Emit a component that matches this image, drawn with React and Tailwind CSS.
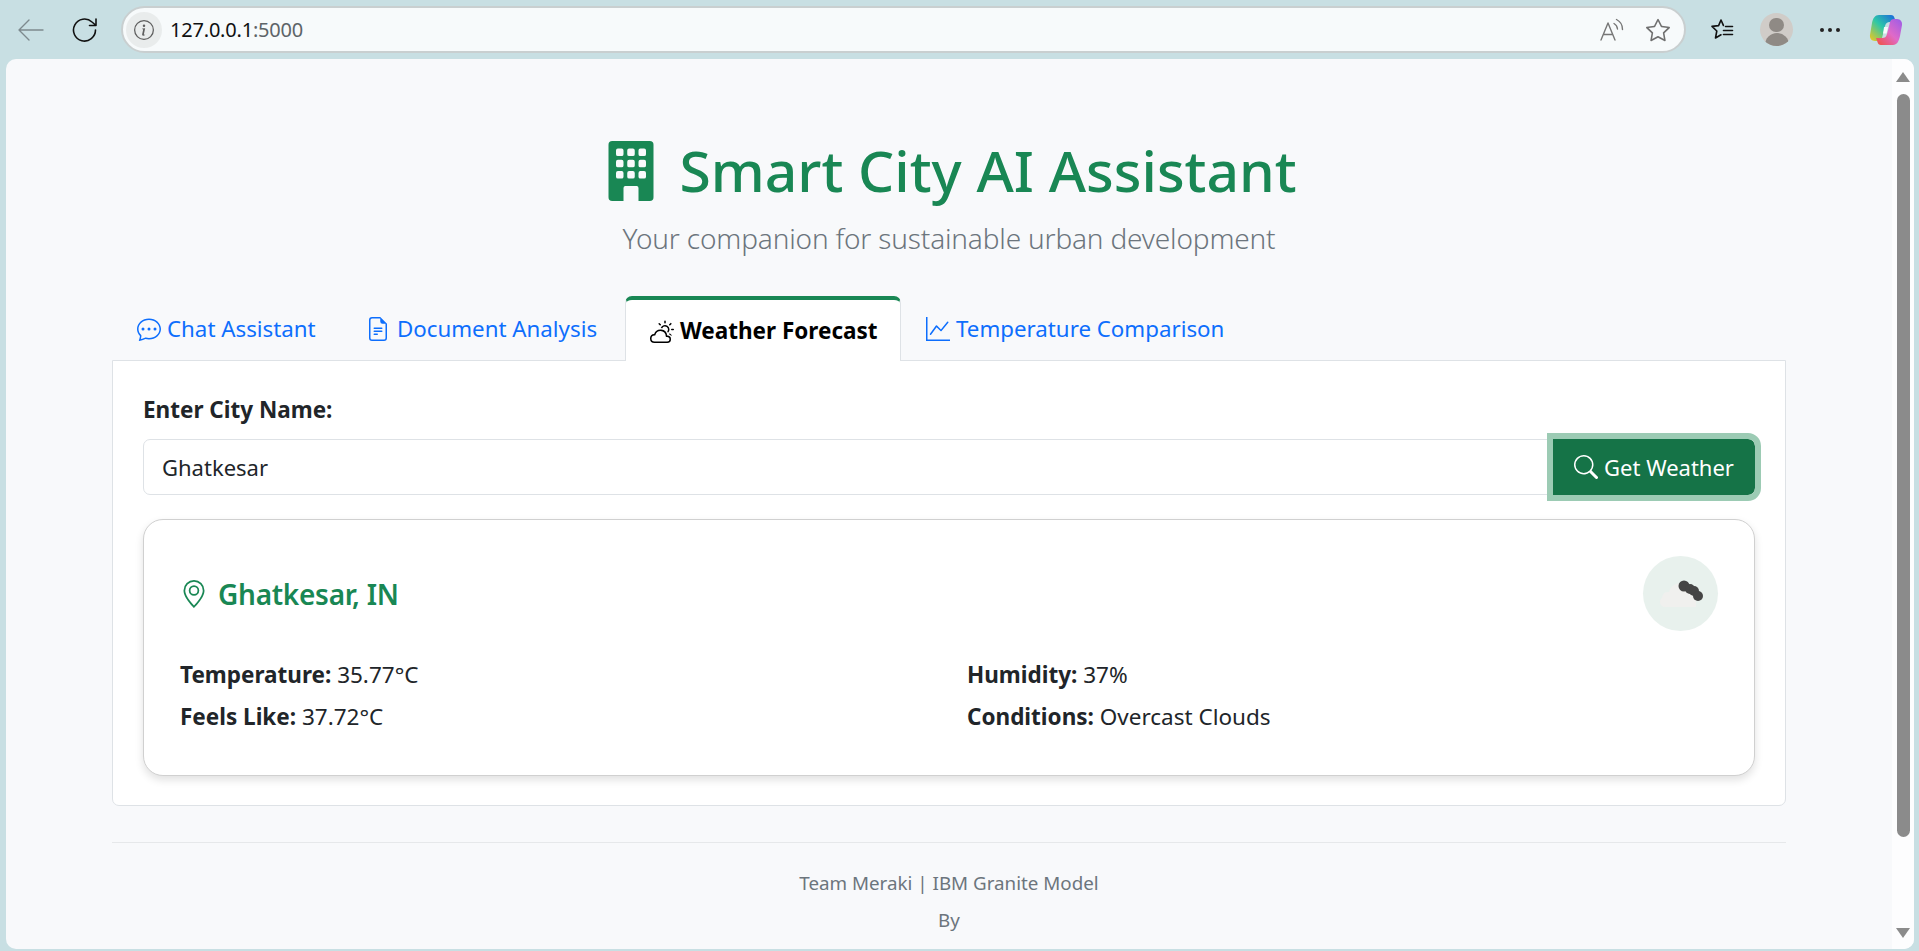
import { BsBuildingFill, BsChatDots, BsFileEarmarkText, BsCloudSun, BsGraphUp, BsSearch, BsGeoAlt, BsInfoCircle, BsStar } from "react-icons/bs";

function ReadAloud() {
  return (
    <svg width="26" height="26" viewBox="0 0 26 26" fill="none" stroke="#767676" strokeWidth="1.4" strokeLinecap="round" strokeLinejoin="round">
      <path d="M1 23 8 6l7 17M3.500 17.500h9" />
      <path d="M14 6.500a7 7 0 0 1 3.500 5.500M16.500 2.500a11 11 0 0 1 6 10" />
    </svg>
  );
}

function Favorites() {
  return (
    <svg width="26" height="26" viewBox="0 0 26 26" fill="none" stroke="#111" strokeWidth="1.6" strokeLinejoin="round" strokeLinecap="round">
      <path d="M12 3 9.600 8.600 3 9.400l4.800 4.600-1.300 7 5.500-3.200M12 3l2.400 5.400" />
      <path d="M16.500 9.500h7M14.500 13.500h9M14.500 17.500h9" />
    </svg>
  );
}

function Copilot() {
  return (
    <svg width="34" height="32" viewBox="0 0 34 32">
      <defs>
        <linearGradient id="copilotA" x1="0" y1="1" x2="1" y2="0">
          <stop offset="0" stopColor="#f5c71a" />
          <stop offset="0.5" stopColor="#2cc7a8" />
          <stop offset="1" stopColor="#1a62e0" />
        </linearGradient>
        <linearGradient id="copilotB" x1="0" y1="1" x2="1" y2="0">
          <stop offset="0" stopColor="#f2503a" />
          <stop offset="0.5" stopColor="#e06ac8" />
          <stop offset="1" stopColor="#9a5ce8" />
        </linearGradient>
      </defs>
      <path d="M10 1h12c2 0 3 1 3.500 3L27 8h-6c-3 0-4 1-5 4l-3 12c-.6 2-2 3-4 3H6c-3.500 0-5.500-3-5-6l2-12C4 4 6 1 10 1z" fill="url(#copilotA)" />
      <path d="M24 31H12c-2 0-3-1-3.500-3L7 24h6c3 0 4-1 5-4l3-12c.6-2 2-3 4-3h3c3.500 0 5.500 3 5 6l-2 11c-1 5-3 9-7 9z" fill="url(#copilotB)" />
      <path d="M15 13h4l-1.500 6.500H14z" fill="#fff" opacity="0.85" />
    </svg>
  );
}

function WeatherIcon() {
  return (
    <svg width="50" height="40" viewBox="0 0 50 40">
      <path d="M9 33a5 5 0 0 1-3-9 6 6 0 0 1 7-6 11 11 0 0 1 14-8l13 16v7z" fill="#f0f0ee" />
      <circle cx="28" cy="12" r="5.500" fill="#454545" />
      <circle cx="34" cy="15" r="5" fill="#454545" />
      <circle cx="38" cy="17" r="5" fill="#454545" />
      <circle cx="42" cy="22" r="5" fill="#454545" />
    </svg>
  );
}

export default function App() {
  return (
    <div className="flex h-[951px] flex-col overflow-hidden bg-[#c8dfe3] font-['Noto_Sans','Open_Sans',sans-serif] text-[#212529]">
      <header className="flex h-[59px] items-center">
        <div className="flex w-[121px] items-center pl-[18px]">
          <svg width="26" height="26" viewBox="0 0 26 26" fill="none" stroke="#7d8a8e" strokeWidth="1.4" strokeLinecap="round" strokeLinejoin="round">
            <path d="M1 13h24M11 3 1 13l10 10" />
          </svg>
          <svg className="ml-[28px]" width="26" height="26" viewBox="0 0 26 26" fill="none" stroke="#111" strokeWidth="1.6" strokeLinecap="round" strokeLinejoin="round">
            <path d="M23.500 13A11 11 0 1 1 20 5l3.500 3M24 2v6.500h-6.500" />
          </svg>
        </div>
        <div className="flex h-[47px] w-[1565px] items-center rounded-full border-2 border-[#c9cfd0] bg-[#f7fafb] pl-[3px] pr-[14px]">
          <span className="flex h-[36px] w-[36px] items-center justify-center rounded-full bg-[#e9ecec] text-[#5e5e5e]">
            <BsInfoCircle size={20} />
          </span>
          <span className="ml-[8px] flex-1 text-[20px] tracking-[-0.01em] text-[#101010]">
            127.0.0.1<span className="text-[#5d6468]">:5000</span>
          </span>
          <ReadAloud />
          <BsStar className="ml-[20px] text-[#6f6f6f]" size={24} />
        </div>
        <div className="flex flex-1 items-center pl-[23px]">
          <Favorites />
          <span className="ml-[25px] flex h-[33px] w-[33px] items-end justify-center overflow-hidden rounded-full bg-[#d0ccc8]">
            <span className="relative flex h-[28px] w-[26px] flex-col items-center">
              <span className="h-[15px] w-[15px] rounded-full bg-[#8f8a85]" />
              <span className="mt-[1px] h-[14px] w-[24px] rounded-t-full bg-[#8f8a85]" />
            </span>
          </span>
          <span className="ml-[27px] flex gap-[4px]">
            <i className="h-[4px] w-[4px] rounded-full bg-[#222]" />
            <i className="h-[4px] w-[4px] rounded-full bg-[#222]" />
            <i className="h-[4px] w-[4px] rounded-full bg-[#222]" />
          </span>
          <span className="ml-[29px]"><Copilot /></span>
        </div>
      </header>

      <div className="mb-[2px] ml-[6px] mr-[5px] flex min-h-0 flex-1 overflow-hidden rounded-[10px] bg-[#f8f9fb]">
        <main className="min-w-0 flex-1 overflow-hidden pl-[106px] pr-[106px]">
          <div className="mt-[78px] flex items-center justify-center gap-[18px] text-[#198754]">
            <BsBuildingFill size={60} />
            <h1 className="text-[57px] font-medium leading-[67px]">Smart City AI Assistant</h1>
          </div>
          <p className="mt-[13px] text-center text-[28px] font-light leading-[42px] tracking-[-0.006em] text-[#6c757d]">
            Your companion for sustainable urban development
          </p>

          <nav className="mt-[35px] flex h-[66px] items-end text-[22.3px] text-[#0d6efd]">
            <a className="flex h-[62px] w-[230px] items-center gap-[6px] pl-[25px]"><BsChatDots size={24} />Chat Assistant</a>
            <a className="flex h-[62px] w-[283px] items-center gap-[7px] pl-[24px]"><BsFileEarmarkText size={24} />Document Analysis</a>
            <a className="relative top-px flex h-[65px] w-[276px] items-center gap-[6px] rounded-t-[7px] border-x border-t-4 border-x-[#dee2e6] border-t-[#198754] bg-white pl-[24px] pt-[1px] text-[22.5px] font-bold text-black"><BsCloudSun size={24} />Weather Forecast</a>
            <a className="flex h-[62px] items-center gap-[6px] pl-[25px]"><BsGraphUp size={24} />Temperature Comparison</a>
          </nav>

          <section className="h-[446px] rounded-b-[7px] border border-[#dee2e6] bg-white pl-[30px] pr-[30px] pt-[34px]">
            <label className="block text-[22.5px] font-bold leading-[30px]">Enter City Name:</label>
            <div className="mt-[14px] flex h-[56px]">
              <input
                className="min-w-0 flex-1 rounded-l-[7px] border border-[#dee2e6] bg-white px-[18px] text-[22px] text-[#212529] outline-none"
                defaultValue="Ghatkesar"
              />
              <button className="z-10 flex w-[202px] items-center justify-center gap-[6px] rounded-r-[7px] bg-[#157347] text-[22px] text-white outline-[6px] outline-[#9ccbb4]">
                <BsSearch size={24} />Get Weather
              </button>
            </div>

            <div className="mt-[24px] h-[257px] rounded-[20px] border border-[#d0d0d0] bg-white px-[36px] pt-[36px] shadow-[0_4px_8px_rgba(0,0,0,0.12)]">
              <div className="flex items-center justify-between">
                <h3 className="flex items-center gap-[10px] text-[28px] font-semibold tracking-[-0.01em] text-[#198754]">
                  <BsGeoAlt size={28} />Ghatkesar, IN
                </h3>
                <span className="flex h-[75px] w-[75px] items-center justify-center rounded-full bg-[#e8f1ed]"><WeatherIcon /></span>
              </div>
              <div className="mt-[29px] grid grid-cols-2 gap-x-[36px] text-[22.5px]">
                <div className="flex flex-col gap-[12px] leading-[30px]">
                  <p><b className="font-bold">Temperature:</b> 35.77°C</p>
                  <p><b className="font-bold">Feels Like:</b> 37.72°C</p>
                </div>
                <div className="flex flex-col gap-[12px] leading-[30px]">
                  <p><b className="font-bold">Humidity:</b> 37%</p>
                  <p><b className="font-bold">Conditions:</b> Overcast Clouds</p>
                </div>
              </div>
            </div>
          </section>

          <footer className="mt-[36px] border-t border-[#e6e8ea] pt-[27px] text-center text-[18.8px] leading-[26px] text-[#6c757d]">
            <p>Team Meraki | IBM Granite Model</p>
            <p className="mt-[11px]">By</p>
          </footer>
        </main>
        <aside className="flex w-[22px] flex-col items-center bg-[#fdfdfe] pb-[11px] pt-[13px]">
          <span className="h-0 w-0 border-x-[7px] border-b-[10px] border-x-transparent border-b-[#8b8b8b]" />
          <span className="mt-[12px] h-[743px] w-[13px] rounded-full bg-[#8b8b8b]" />
          <span className="mt-auto h-0 w-0 border-x-[7px] border-t-[10px] border-x-transparent border-t-[#8b8b8b]" />
        </aside>
      </div>
    </div>
  );
}
